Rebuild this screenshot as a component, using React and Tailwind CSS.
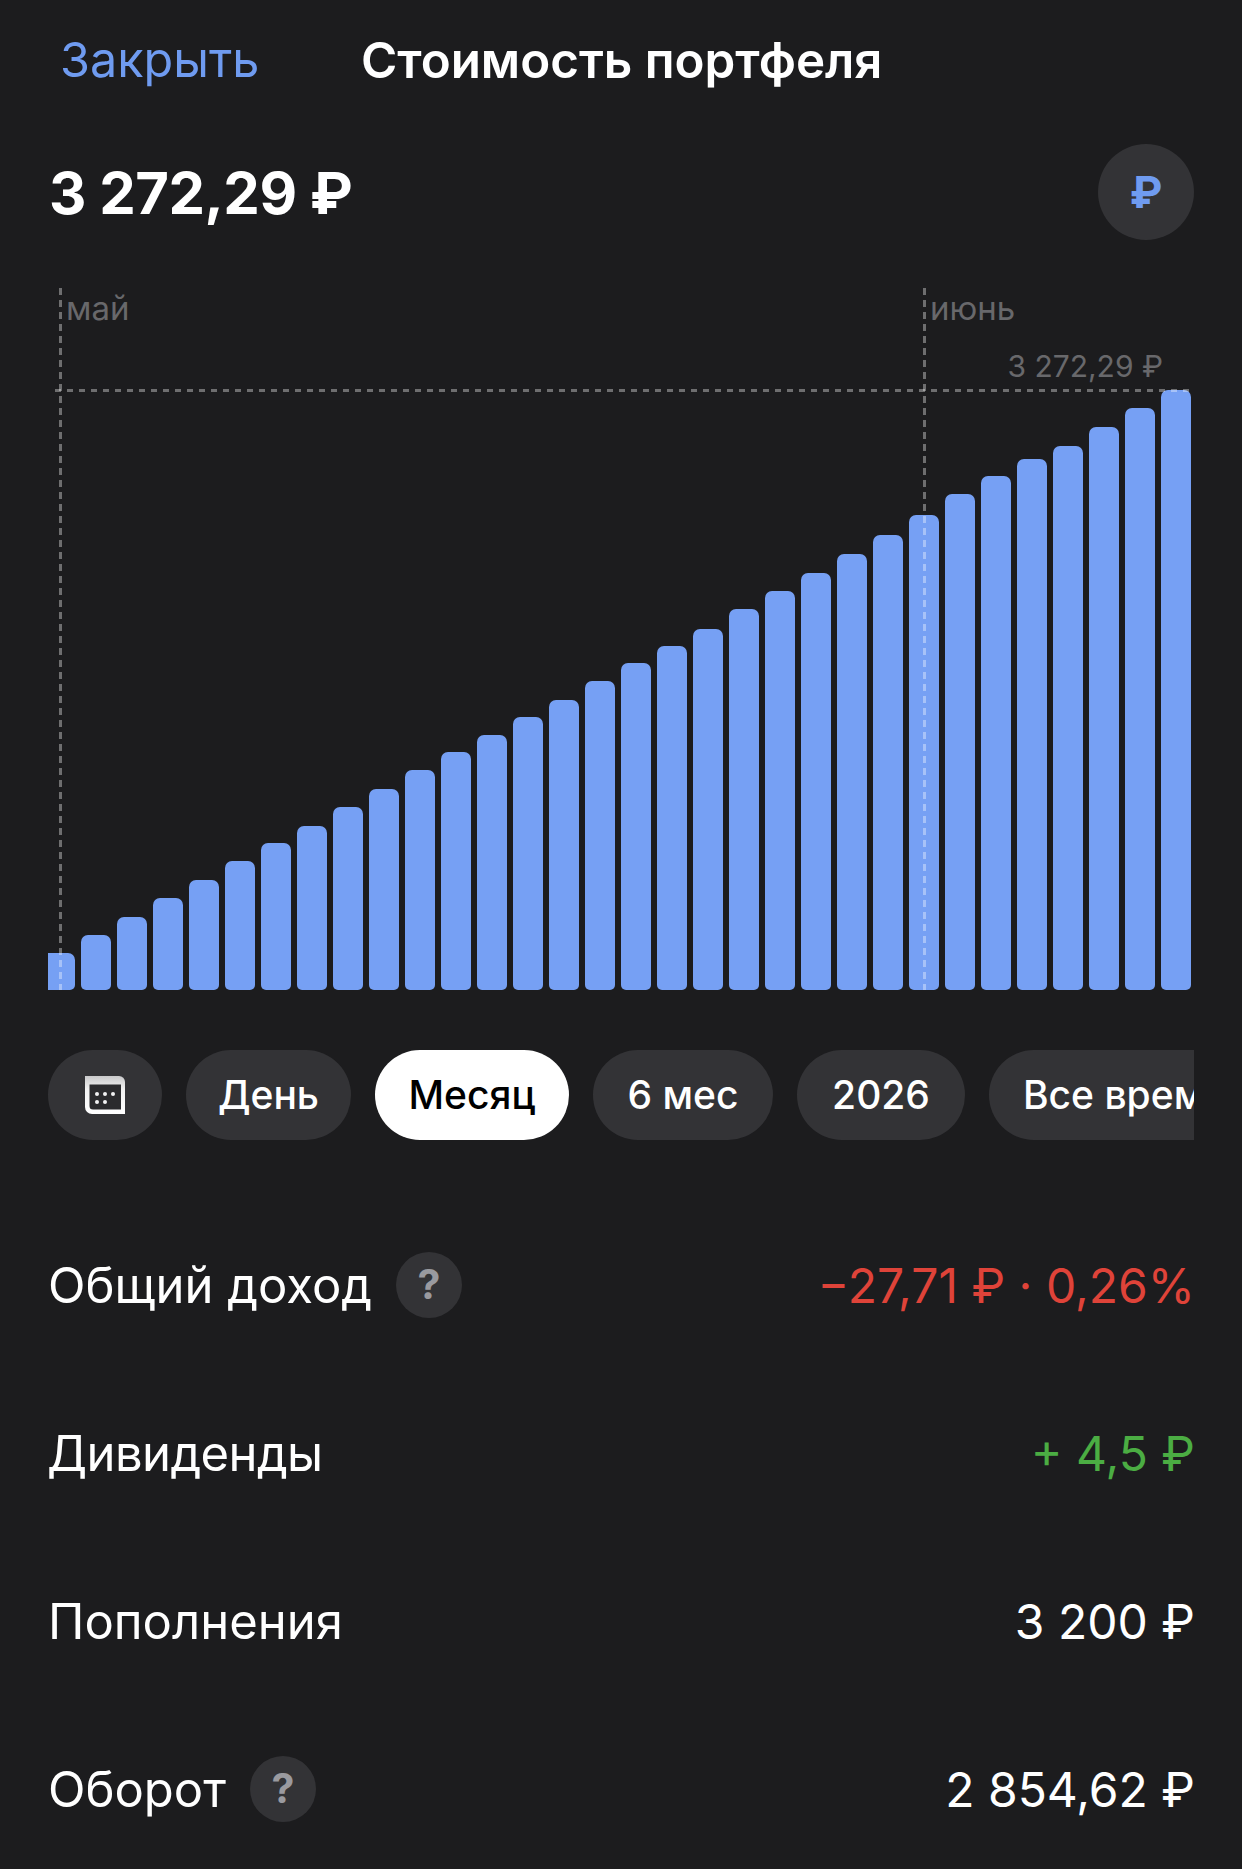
import { useMemo } from "react";

const barTops = [
  953, 935, 917, 898, 880, 861, 843, 826, 807, 789, 770, 752, 735, 717, 700, 681,
  663, 646, 629, 609, 591, 573, 554, 535, 515, 494, 476, 459, 446, 427, 408, 390,
];

const periods = [
  { label: "День", width: 165, active: false },
  { label: "Месяц", width: 194, active: true },
  { label: "6 мес", width: 180, active: false },
  { label: "2026", width: 168, active: false },
];

const CHART_BOTTOM = 990;
const CHART_TOP = 288;

const CalendarIcon = () => (
  <svg width="40" height="38" viewBox="0 0 40 38">
    <defs>
      <linearGradient id="calHeader" x1="0" y1="0" x2="0" y2="1">
        <stop offset="0" stopColor="#c9c9ca" />
        <stop offset="0.35" stopColor="#f2f2f2" />
        <stop offset="1" stopColor="#ffffff" />
      </linearGradient>
    </defs>
    <path d="M0 0H34A6 6 0 0 1 40 6V38H7A7 7 0 0 1 0 31Z" fill="url(#calHeader)" />
    <path d="M4.500 8.500H36V33.500H8A3.500 3.500 0 0 1 4.500 30Z" fill="#2b2b2d" />
    <circle cx="12" cy="18" r="2" fill="#f2f2f2" />
    <circle cx="20" cy="18" r="2" fill="#f2f2f2" />
    <circle cx="28" cy="18" r="2" fill="#f2f2f2" />
    <circle cx="12" cy="26" r="2" fill="#f2f2f2" />
    <circle cx="20" cy="26" r="2" fill="#f2f2f2" />
  </svg>
);

const Hint = () => (
  <span className="flex h-[66px] w-[66px] items-center justify-center rounded-full bg-[#333336] text-[41px] font-bold text-[#9a9a9f]">
    ?
  </span>
);

const Row = ({ label, value, labelClass = "", valueClass = "text-white", hint = false }) => (
  <div className="flex h-[168px] items-center justify-between">
    <div className="flex items-center gap-[24px]">
      <span className={`text-[49px] leading-none text-white ${labelClass}`}>{label}</span>
      {hint ? <Hint /> : null}
    </div>
    <span className={`-mr-[1px] pt-[2px] text-[48px] leading-none ${valueClass}`}>{value}</span>
  </div>
);

const App = () => {
  const bars = useMemo(() => barTops.map((top) => CHART_BOTTOM - top), []);

  return (
    <div
      className="h-[1869px] w-[1242px] overflow-hidden bg-[#1c1c1e] text-white"
      style={{ fontFamily: "Inter, 'Noto Sans', sans-serif" }}
    >
      <header className="flex h-[122px] items-center pl-[60px]">
        <span className="w-[301px] pb-[1px] text-[48.500px] leading-none text-[#6f9bf0]">Закрыть</span>
        <span className="pb-[1px] text-[49.300px] font-semibold leading-none">Стоимость портфеля</span>
      </header>

      <div className="mt-[22px] flex items-center justify-between px-[48px]">
        <span className="pl-[1px] pt-[1px] text-[58px] font-bold leading-none tracking-[-0.5px]">3 272,29 ₽</span>
        <span className="flex h-[96px] w-[96px] items-center justify-center rounded-full bg-[#333336] text-[44px] font-bold text-[#6f9bf0]">
          ₽
        </span>
      </div>

      <div className="relative mx-[48px] mt-[48px] flex items-end gap-[6px]" style={{ height: CHART_BOTTOM - CHART_TOP }}>
        {bars.map((height, index) => (
          <div
            key={index}
            className={
              index === 0
                ? "w-[27px] rounded-tr-[7px] rounded-br-[5px] bg-[#76a0f4]"
                : "w-[30px] rounded-t-[7px] rounded-b-[5px] bg-[#76a0f4]"
            }
            style={{ height }}
          />
        ))}

        <div className="absolute bottom-0 left-[11px] top-0 w-[3px] bg-[repeating-linear-gradient(to_bottom,rgba(255,255,255,0.36)_0_7px,transparent_7px_12px)]" />
        <div className="absolute bottom-0 left-[875px] top-0 w-[3px] bg-[repeating-linear-gradient(to_bottom,rgba(255,255,255,0.36)_0_7px,transparent_7px_12px)]" />
        <div className="absolute left-[7px] top-[101px] h-[3px] w-[1136px] bg-[repeating-linear-gradient(to_right,rgba(255,255,255,0.36)_0_6px,transparent_6px_12px)]" />

        <span className="absolute left-[18px] top-[5px] text-[33px] leading-[30px] text-[#68686b]">май</span>
        <span className="absolute left-[882px] top-[5px] text-[33px] leading-[30px] text-[#68686b]">июнь</span>
        <span className="absolute right-[31px] top-[63px] text-[30px] leading-[30px] text-[#68686b]">3 272,29 ₽</span>
      </div>

      <div className="mx-[48px] mt-[60px] flex h-[90px] gap-[24px] overflow-hidden">
        <div className="flex w-[114px] shrink-0 items-center justify-center rounded-full bg-[#333336]">
          <CalendarIcon />
        </div>
        {periods.map((period) => (
          <div
            key={period.label}
            className={
              period.active
                ? "flex shrink-0 items-center justify-center rounded-full bg-white text-[39px] font-medium text-black"
                : "flex shrink-0 items-center justify-center rounded-full bg-[#333336] text-[39px] font-medium text-white"
            }
            style={{ width: period.width }}
          >
            {period.label}
          </div>
        ))}
        <div className="flex shrink-0 items-center rounded-full bg-[#333336] px-[34px] text-[39px] font-medium text-white">
          Все время
        </div>
      </div>

      <div className="mt-[61px] px-[48px]">
        <Row label="Общий доход" value="−27,71 ₽ · 0,26%" valueClass="text-[#df4339]" hint />
        <Row label="Дивиденды" value="+ 4,5 ₽" labelClass="-ml-[1px] tracking-[-0.6px]" valueClass="text-[#4bad43]" />
        <Row label="Пополнения" value="3 200 ₽" />
        <Row label="Оборот" value="2 854,62 ₽" hint />
      </div>
    </div>
  );
};

export default App;
